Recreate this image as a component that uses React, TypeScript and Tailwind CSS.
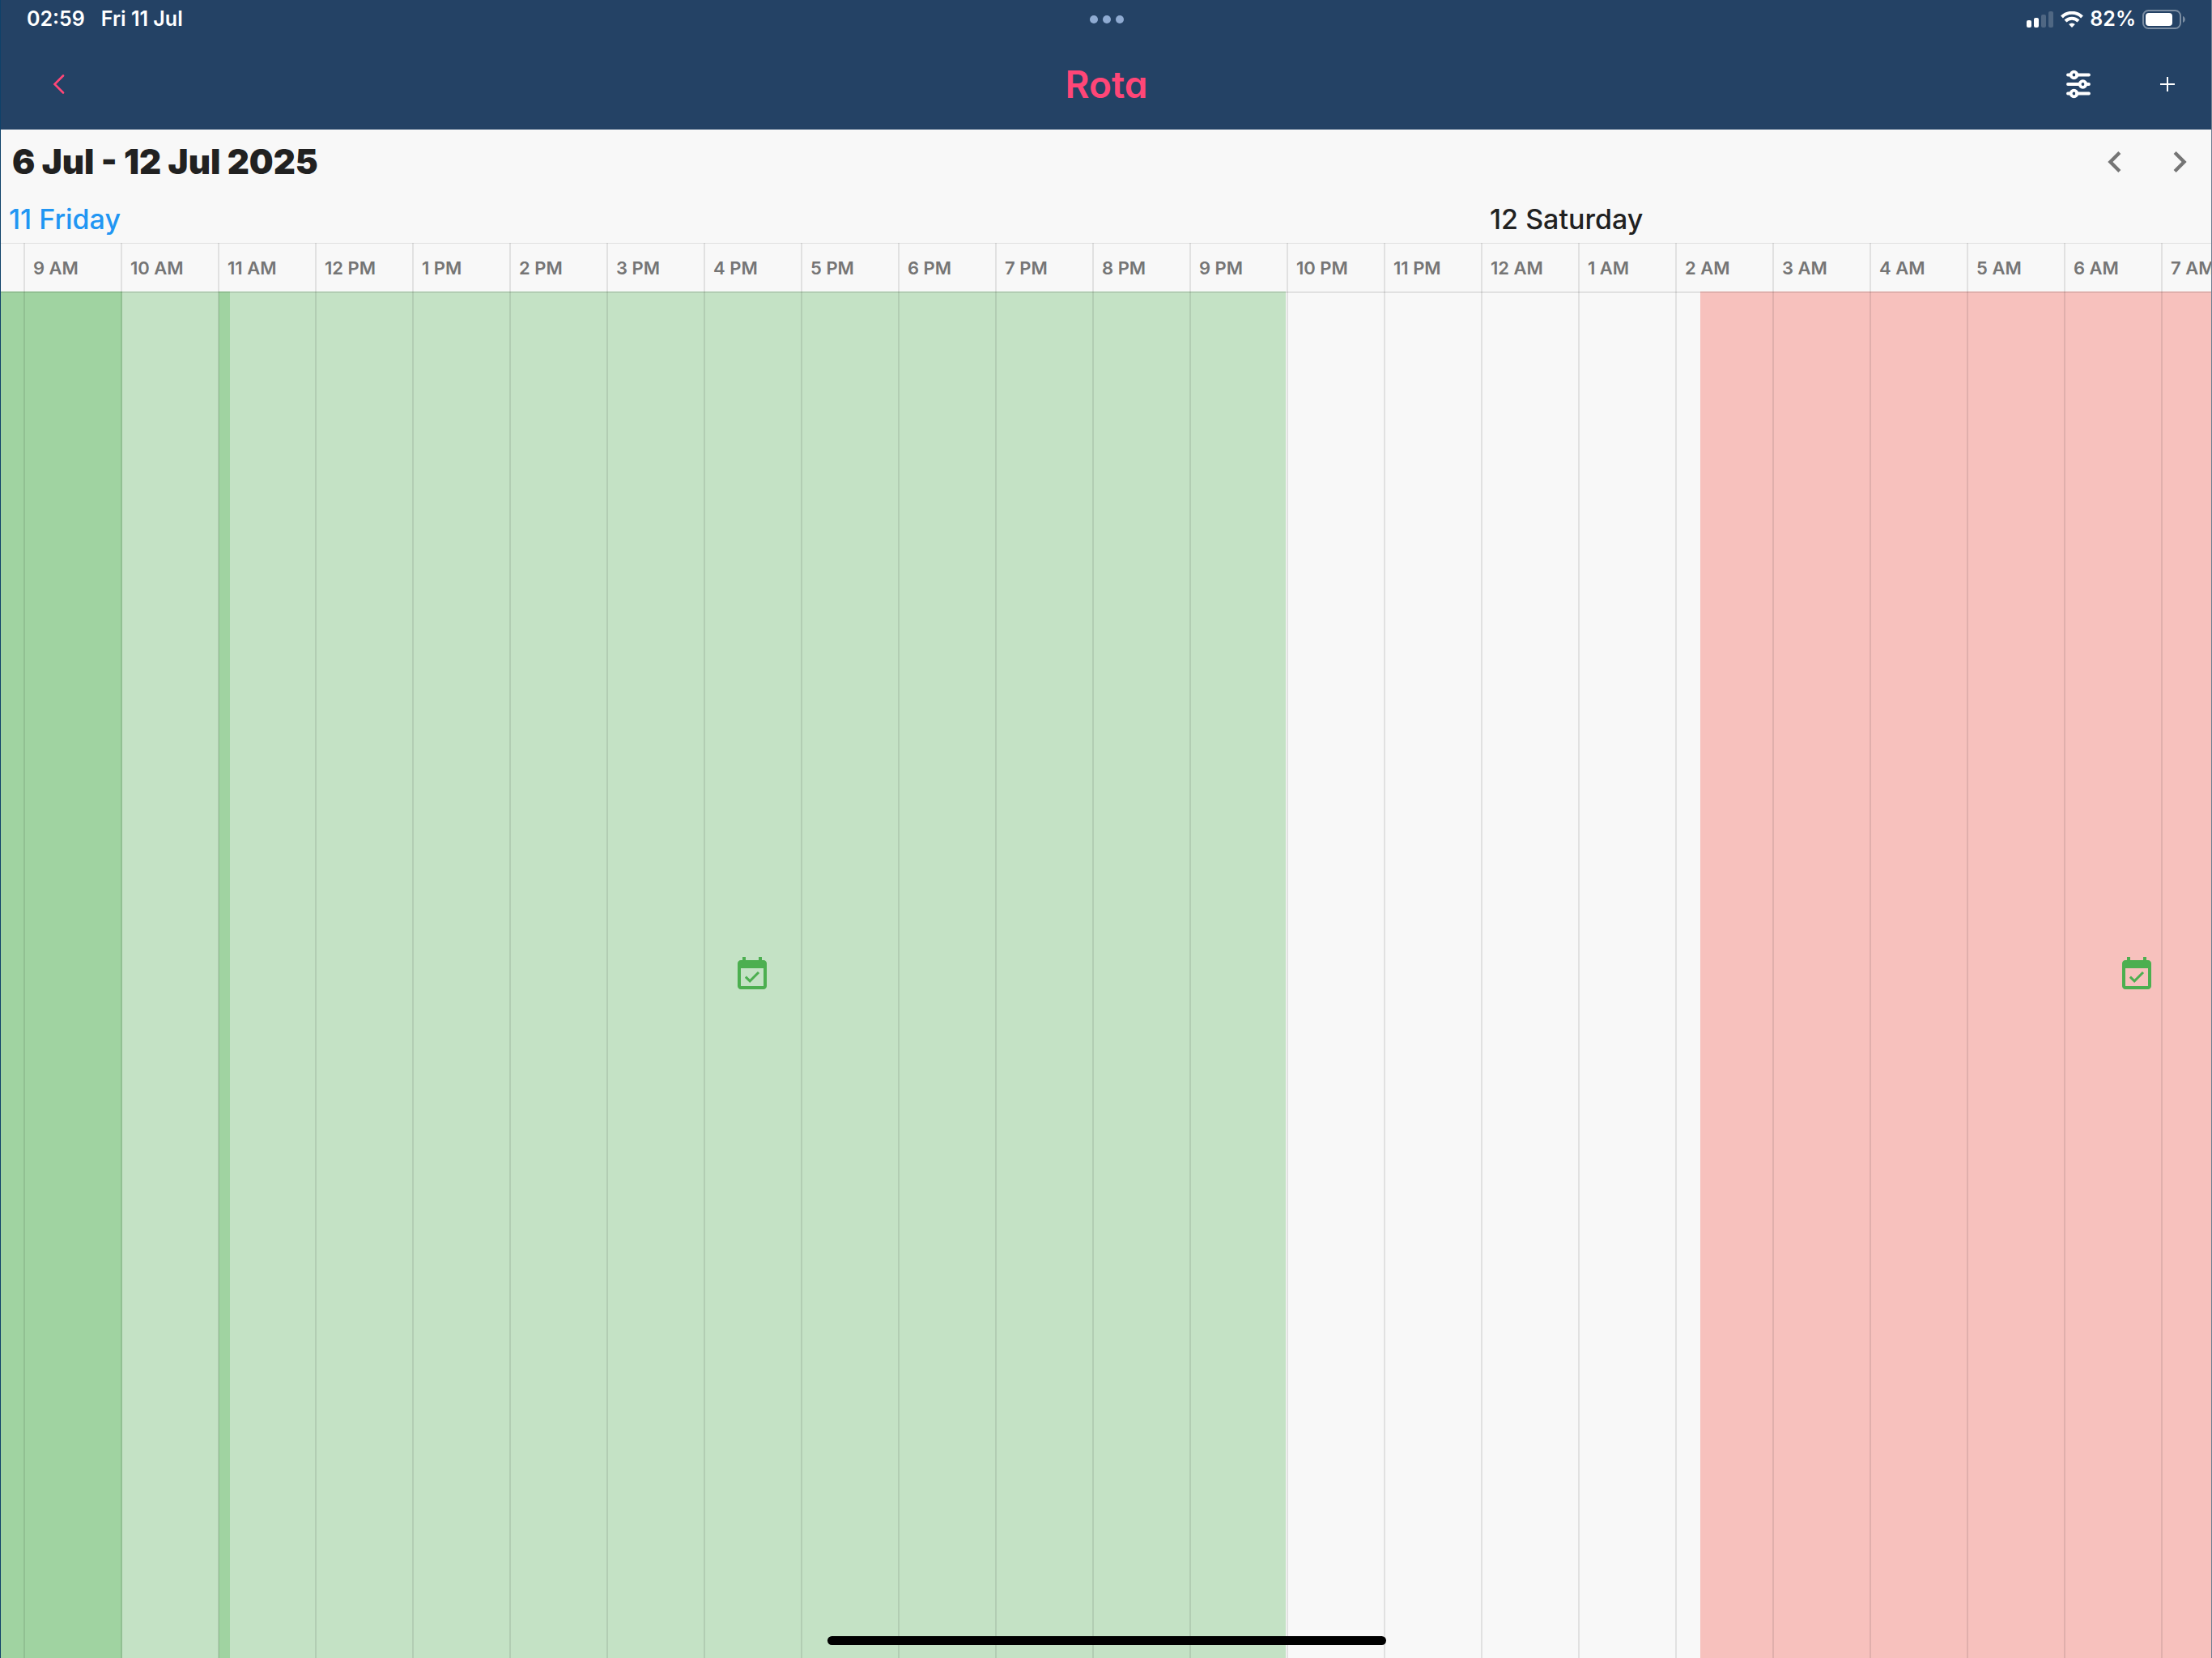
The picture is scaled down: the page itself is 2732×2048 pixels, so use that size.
import React from "react";

const hours = Array.from({ length: 23 }, (_, i) => {
  const h = (9 + i) % 24;
  return `${h % 12 === 0 ? 12 : h % 12} ${h < 12 ? "AM" : "PM"}`;
});

type Shift = { id: string; start: number; end: number; tone: string };

// Pixels along the timeline, measured from the left edge of the view.
const shifts: Shift[] = [
  { id: "early", start: -810, end: 150, tone: "bg-[#4caf50]/30" },
  { id: "morning", start: -677, end: 283, tone: "bg-[#4caf50]/30" },
  { id: "day", start: 269, end: 1587, tone: "bg-[#4caf50]/30" },
  { id: "night", start: 2099, end: 3177, tone: "bg-[#f44336]/30" },
];

function Signal() {
  return (
    <svg width="34" height="20" viewBox="0 0 34 20" fill="#fff" aria-hidden="true">
      <rect x="0" y="11" width="6" height="9" rx="2" />
      <rect x="9" y="8" width="6" height="12" rx="2" />
      <rect x="18" y="4" width="6" height="16" rx="2" opacity=".2" />
      <rect x="27" y="0" width="6" height="20" rx="2" opacity=".2" />
    </svg>
  );
}

function Wifi() {
  return (
    <svg width="28" height="20" viewBox="0 0 28 20" aria-hidden="true">
      <path d="M1.5 7a17.600 17.600 0 0 1 25 0" fill="none" stroke="#fff" strokeWidth="4" />
      <path d="M6 12a11.200 11.200 0 0 1 16 0" fill="none" stroke="#fff" strokeWidth="4" />
      <path d="M14 20l-3.900-4a5.600 5.600 0 0 1 7.800 0z" fill="#fff" />
    </svg>
  );
}

function Battery() {
  return (
    <svg width="54" height="24" viewBox="0 0 54 24" aria-hidden="true">
      <rect x="1" y="1" width="46" height="22" rx="6.5" fill="none" stroke="#fff" strokeOpacity=".4" strokeWidth="2" />
      <rect x="4" y="4" width="33" height="16" rx="4" fill="#fff" />
      <path d="M50 8v8c1.600-.6 2.800-2.200 2.800-4s-1.200-3.400-2.800-4z" fill="#fff" fillOpacity=".4" />
    </svg>
  );
}

function Sliders() {
  return (
    <svg width="32" height="36" viewBox="0 0 32 36" fill="none" stroke="#fff" strokeWidth="3.800" strokeLinecap="round" aria-hidden="true">
      <path d="M3 6.500H5M14 6.500h15M3 18H16.500M25.500 18H29M3 29.500H5M14 29.500h15" />
      <circle cx="10.500" cy="6.500" r="3.800" />
      <circle cx="21.500" cy="18" r="3.800" />
      <circle cx="10.500" cy="29.500" r="3.800" />
    </svg>
  );
}

function EventAvailable() {
  return (
    <svg className="size-12 shrink-0" viewBox="0 0 24 24" fill="#4caf50" aria-hidden="true">
      <path d="M16.530 11.060 15.470 10l-4.880 4.880-2.120-2.120-1.060 1.060L10.590 17l5.940-5.940zM19 3h-1V1h-2v2H8V1H6v2H5c-1.110 0-1.990.9-1.990 2L3 19c0 1.100.89 2 2 2h14c1.100 0 2-.9 2-2V5c0-1.100-.9-2-2-2zm0 16H5V8h14v11z" />
    </svg>
  );
}

function Chevron({ dir }: { dir: "left" | "right" }) {
  return (
    <svg width="52" height="52" viewBox="0 0 24 24" fill="#757575" aria-hidden="true">
      {dir === "left" ? (
        <path d="M15.410 7.410 14 6l-6 6 6 6 1.410-1.410L10.830 12z" />
      ) : (
        <path d="M8.590 16.590 10 18l6-6-6-6-1.410 1.410L13.170 12z" />
      )}
    </svg>
  );
}

export default function App() {
  return (
    <div className="relative flex h-screen w-full flex-col overflow-hidden border-l border-[#0f4169] bg-[#f8f8f8] font-['Inter',sans-serif]">
      <header className="flex h-40 shrink-0 flex-col bg-[#244265] text-white">
        <div className="grid h-12 grid-cols-3 items-center px-8 text-[25px] font-semibold">
          <div className="flex gap-5">
            <time>02:59</time>
            <span>Fri 11 Jul</span>
          </div>
          <div className="flex justify-center gap-1.5">
            <span className="size-2.5 rounded-full bg-[#8fabd2]" />
            <span className="size-2.5 rounded-full bg-[#8fabd2]" />
            <span className="size-2.5 rounded-full bg-[#8fabd2]" />
          </div>
          <div className="flex items-center justify-end gap-2">
            <Signal />
            <Wifi />
            <span>82%</span>
            <Battery />
          </div>
        </div>
        <div className="grid h-28 grid-cols-3 items-start">
          <button aria-label="Back" className="flex h-28 w-36 items-start justify-center pt-11">
            <svg width="16" height="24" viewBox="0 0 16 24" fill="none" stroke="#ff4677" strokeWidth="2.600" strokeLinecap="round" aria-hidden="true">
              <path d="M13 1.500 2.500 12 13 22.500" />
            </svg>
          </button>
          <h1 className="pt-7 text-center text-[46px] leading-14 font-semibold text-[#ff4677] [font-feature-settings:'cv11']">Rota</h1>
          <div className="flex h-28 items-center justify-end">
            <button aria-label="Filters" className="flex h-28 w-[110px] items-center justify-center">
              <Sliders />
            </button>
            <button aria-label="Add shift" className="flex h-28 w-[110px] items-center justify-center">
              <svg width="18" height="18" viewBox="0 0 18 18" stroke="#fff" strokeWidth="2" aria-hidden="true">
                <path d="M9 0v18M0 9h18" />
              </svg>
            </button>
          </div>
        </div>
      </header>

      <div className="flex h-20 shrink-0 items-center justify-between pl-3.5">
        <h2 className="text-[42px] leading-20 font-black text-[#212121]">6 Jul - 12 Jul 2025</h2>
        <nav className="flex">
          <button aria-label="Previous week" className="flex size-20 items-center justify-center">
            <Chevron dir="left" />
          </button>
          <button aria-label="Next week" className="flex size-20 items-center justify-center">
            <Chevron dir="right" />
          </button>
        </nav>
      </div>

      <div className="flex h-15 shrink-0 items-center text-[34px] font-medium whitespace-nowrap">
        <div className="w-[1829px] shrink-0 pl-2.5 text-[#2196f3]">11 Friday</div>
        <div className="pl-2.5 text-[#212121]">12 Saturday</div>
      </div>

      <main className="relative flex min-h-0 grow">
        <div className="absolute inset-x-0 top-15 bottom-0 overflow-hidden">
          {shifts.map((s) => (
            <div
              key={s.id}
              className={`absolute inset-y-0 flex items-center justify-center ${s.tone}`}
              style={{ left: s.start, width: s.end - s.start }}
            >
              <EventAvailable />
            </div>
          ))}
        </div>
        <ol className="relative flex grow overflow-hidden">
          <li className="flex w-7 shrink-0 flex-col">
            <div className="h-[62px] border-t border-b-2 border-t-black/9 border-b-black/9" />
          </li>
          {hours.map((label) => (
            <li key={label} className="flex w-30 shrink-0 flex-col border-l-2 border-black/9">
              <div className="-ml-0.5 h-[62px] border-t border-b-2 border-t-black/9 border-b-black/9 pl-3 text-[22px] leading-[60px] font-semibold whitespace-nowrap text-[#757575]">
                {label}
              </div>
            </li>
          ))}
        </ol>
      </main>

      <div className="absolute inset-y-0 right-0 w-px bg-[#6d7f92]" />
      <div className="absolute bottom-4 left-1/2 h-[11px] w-[690px] -translate-x-1/2 rounded-full bg-black" />
    </div>
  );
}
